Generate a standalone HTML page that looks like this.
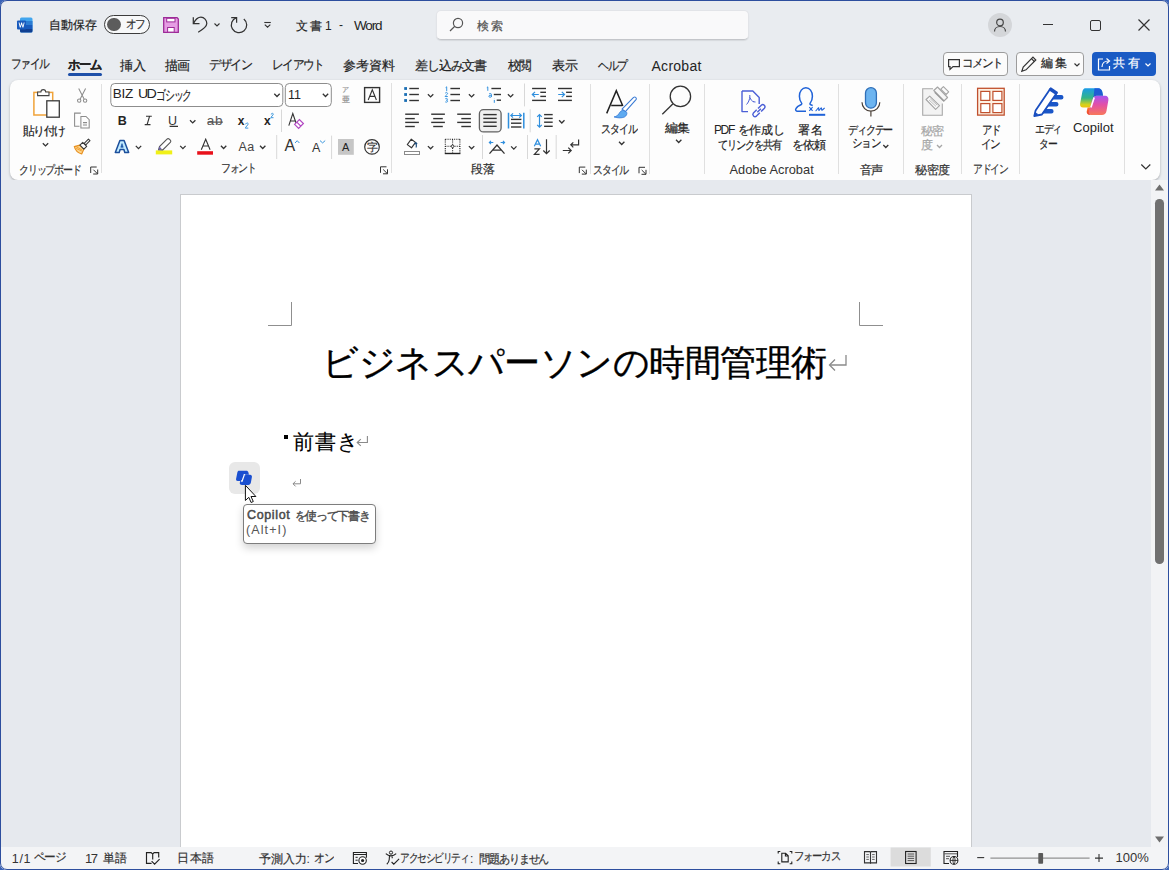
<!DOCTYPE html>
<html lang="ja"><head><meta charset="utf-8">
<style>
*{box-sizing:border-box}
html,body{margin:0;padding:0;width:1169px;height:870px;overflow:hidden;background:#3a63b8}
body{font-family:"Liberation Sans",sans-serif;color:#242424;position:relative}
.a{position:absolute;white-space:nowrap;line-height:1;-webkit-text-stroke:0.2px currentColor}
#win{position:absolute;left:0;top:0;width:1169px;height:870px;background:#e9ecf0;border-radius:7px;overflow:hidden}
#frame{position:absolute;left:0;top:0;width:1169px;height:870px;border:1px solid #2d4e9e;border-radius:7px;pointer-events:none}
.sep{position:absolute;width:1px;background:#e0e0e0}
svg{position:absolute;overflow:visible}
.btn{position:absolute;border:1px solid #9c9c9c;border-radius:4px;background:#fbfbfb}
</style></head><body>
<div id="win">
<svg style="left:17px;top:17px" width="16" height="16" viewBox="0 0 16 16">
 <rect x="3" y="0.5" width="12.5" height="15" rx="1.5" fill="#41a5ee"/>
 <rect x="3" y="4" width="12.5" height="4" fill="#2b7cd3"/>
 <rect x="3" y="8" width="12.5" height="4" fill="#185abd"/>
 <path d="M3 12h12.5v2a1.5 1.5 0 0 1-1.5 1.5H4.5A1.5 1.5 0 0 1 3 14z" fill="#103f91"/>
 <rect x="0" y="3.5" width="9" height="9" rx="1" fill="#185abd"/>
 <path d="M1.6 5.6l1.2 5h.9l.9-3.2.9 3.2h.9l1.2-5h-.9l-.8 3.4-.9-3.4h-.8l-.9 3.4-.8-3.4z" fill="#fff"/>
</svg><div class="a" style="left:48.60px;top:18.80px;font-size:12px;letter-spacing:0.13px">自動保存</div><div class="a" style="left:104px;top:15px;width:46px;height:19px;border:1px solid #3c3c3c;border-radius:10px;background:#f7f8f9"></div><div class="a" style="left:107.3px;top:17.6px;width:13.4px;height:13.4px;border-radius:7px;background:#5c5c5c"></div><div class="a" style="left:125.60px;top:17.80px;font-size:12px;color:#333;letter-spacing:-1.44px;transform:scaleX(0.8867);transform-origin:0 0">オフ</div><svg style="left:163px;top:17px" width="16" height="16" viewBox="0 0 16 16">
 <path d="M.7 .7h13.4l1.2 1.2v13.4H.7z" fill="#e69de4" stroke="#9d2b98" stroke-width="1.3"/>
 <rect x="3.7" y="1.3" width="8.3" height="3.6" fill="#fff" stroke="#9d2b98" stroke-width="1"/>
 <rect x="4.6" y="10.5" width="6.6" height="4.6" fill="#fff" stroke="#9d2b98" stroke-width="1"/>
</svg>
<svg style="left:0;top:0" width="400" height="50" viewBox="0 0 400 50" fill="none" stroke="#333" stroke-width="1.25">
 <path d="M193.3 17.2v6.3h6.2"/><path d="M193.6 23.2c2-3.8 4.4-6 7.3-6 3.3 0 5.9 2.8 5.9 6.4 0 2.5-1.4 4.4-8.6 8.7"/>
 <path d="M231.2 17.5h5.4v5.2"/><path d="M236.4 17.7A7.7 7.7 0 1 0 243.8 18.9"/>
</svg>
<svg style="left:214px;top:22.8px" width="6" height="4" viewBox="0 0 6 4" fill="none" stroke="#333" stroke-width="1.1"><path d="M.5 .5l2.5 2.5 2.5-2.5"/></svg>

<svg style="left:264px;top:22px" width="7" height="6" viewBox="0 0 7 6" fill="none" stroke="#333" stroke-width="1.1"><path d="M.3 .5h6.5"/><path d="M.8 2.6l2.75 2.6 2.75-2.6"/></svg>
<div class="a" style="left:296.00px;top:20.40px;font-size:12px;letter-spacing:2.00px">文書</div><div class="a" style="left:325.00px;top:20.00px;font-size:12px;-webkit-text-stroke:0">1</div><div class="a" style="left:339.00px;top:19.00px;font-size:12px;-webkit-text-stroke:0">-</div><div class="a" style="left:354.00px;top:18.90px;font-size:13.5px;letter-spacing:-1.17px;-webkit-text-stroke:0">Word</div><div class="a" style="left:436px;top:9.7px;width:313px;height:30.5px;background:#f9f9fa;border:1px solid #e2e4e8;border-bottom-color:#c4c6ca;border-radius:5px;box-shadow:0 1px 1px rgba(0,0,0,0.08)"></div><svg style="left:449px;top:17px" width="15" height="15" viewBox="0 0 15 15" fill="none" stroke="#555" stroke-width="1.2">
 <circle cx="9" cy="6" r="4.6"/><path d="M5.8 9.3L1 14"/>
</svg><div class="a" style="left:477.00px;top:20.00px;font-size:12px;color:#555;letter-spacing:2.00px">検索</div><div class="a" style="left:988px;top:13px;width:24px;height:24px;border-radius:12px;background:#d4d6d9"></div>
<svg style="left:992px;top:17px" width="16" height="16" viewBox="0 0 16 16" fill="none" stroke="#444" stroke-width="1.2">
 <circle cx="8" cy="5.5" r="3.3"/><path d="M2.5 14.5c0-3 2.5-5 5.5-5s5.5 2 5.5 5"/>
</svg>
<div class="a" style="left:1043px;top:24px;width:10px;height:1px;background:#333"></div>
<div class="a" style="left:1090px;top:19.5px;width:11px;height:11px;border:1.2px solid #333;border-radius:2px"></div>
<svg style="left:1138px;top:19px" width="12" height="12" viewBox="0 0 12 12" stroke="#333" stroke-width="1.2"><path d="M.5 .5l11 11M11.5 .5l-11 11"/></svg>
<div class="btn" style="left:943px;top:52px;width:65px;height:24px"></div>
<svg style="left:948px;top:59px" width="12" height="11" viewBox="0 0 12 11" fill="none" stroke="#333" stroke-width="1.2"><path d="M.6 .6h10.8v7H5L2 10.4V7.6H.6z"/></svg>
<div class="btn" style="left:1016px;top:52px;width:68px;height:24px"></div>
<svg style="left:1021px;top:56px" width="16" height="16" viewBox="0 0 16 16" fill="none" stroke="#333" stroke-width="1.2"><path d="M12 1.2l2.8 2.8-9.8 9.8-4.2 1.4 1.4-4.2z"/><path d="M10.5 2.7l2.8 2.8"/></svg>
<svg style="left:1074px;top:62.5px" width="6" height="4" viewBox="0 0 6 4" fill="none" stroke="#333" stroke-width="1.2"><path d="M.5 .5l2.5 2.5 2.5-2.5"/></svg>
<div class="a" style="left:1092px;top:52px;width:64px;height:24px;border-radius:4px;background:#1a5bc4"></div>
<svg style="left:1097px;top:57px" width="14" height="14" viewBox="0 0 14 14" fill="none" stroke="#fff" stroke-width="1.2"><path d="M6 2H1.5v11h11V9"/><path d="M5 10c0-4 3-6 6.5-6"/><path d="M9.5 1.5l3 2.5-3 2.5"/></svg>
<svg style="left:1145px;top:62.5px" width="6" height="4" viewBox="0 0 6 4" fill="none" stroke="#fff" stroke-width="1.2"><path d="M.5 .5l2.5 2.5 2.5-2.5"/></svg>
<div class="a" style="left:962.00px;top:57.00px;font-size:12px;letter-spacing:-1.44px;transform:scaleX(0.9615);transform-origin:0 0">コメント</div><div class="a" style="left:1040.70px;top:57.40px;font-size:12px;letter-spacing:2.00px">編集</div><div class="a" style="left:1112.50px;top:57.40px;font-size:12px;color:#fff;letter-spacing:3.20px">共有</div><div class="a" style="left:11.30px;top:57.20px;font-size:13px;letter-spacing:-1.56px;transform:scaleX(0.8216);transform-origin:0 0">ファイル</div><div class="a" style="left:119.50px;top:59.20px;font-size:13px;letter-spacing:0.60px">挿入</div><div class="a" style="left:165.40px;top:59.20px;font-size:13px;letter-spacing:-1.40px">描画</div><div class="a" style="left:209.00px;top:58.20px;font-size:13px;letter-spacing:-1.56px;transform:scaleX(0.9289);transform-origin:0 0">デザイン</div><div class="a" style="left:271.50px;top:58.20px;font-size:13px;letter-spacing:-1.56px;transform:scaleX(0.8991);transform-origin:0 0">レイアウト</div><div class="a" style="left:343.00px;top:59.20px;font-size:13px;letter-spacing:-0.07px">参考資料</div><div class="a" style="left:415.40px;top:59.20px;font-size:13px;letter-spacing:-1.28px">差し込み文書</div><div class="a" style="left:507.80px;top:59.20px;font-size:13px;letter-spacing:-1.56px;transform:scaleX(0.9698);transform-origin:0 0">校閲</div><div class="a" style="left:552.30px;top:59.20px;font-size:13px;letter-spacing:-0.20px">表示</div><div class="a" style="left:597.50px;top:59.20px;font-size:13px;letter-spacing:-1.56px;transform:scaleX(0.8364);transform-origin:0 0">ヘルプ</div><div class="a" style="left:651.50px;top:58.50px;font-size:14px;letter-spacing:0.27px;-webkit-text-stroke:0">Acrobat</div><div class="a" style="left:67.80px;top:58.20px;font-size:13px;font-weight:bold;letter-spacing:-1.56px;transform:scaleX(0.9453);transform-origin:0 0">ホーム</div><div class="a" style="left:68px;top:73px;width:34px;height:3px;border-radius:1.5px;background:#1d4fa8"></div><div class="a" style="left:9.5px;top:79.5px;width:1150px;height:100.5px;background:#fdfdfd;border-radius:8px;box-shadow:0 1px 2.5px rgba(0,0,0,0.28)"></div><div class="sep" style="left:101.3px;top:83.5px;height:89.5px"></div><div class="sep" style="left:391.3px;top:82.5px;height:90.5px"></div><div class="sep" style="left:589.8px;top:84px;height:89.80000000000001px"></div><div class="sep" style="left:649.3px;top:84px;height:89.80000000000001px"></div><div class="sep" style="left:703.9px;top:84px;height:89.80000000000001px"></div><div class="sep" style="left:838.0px;top:84px;height:89.80000000000001px"></div><div class="sep" style="left:903.1px;top:84px;height:89.80000000000001px"></div><div class="sep" style="left:961.0px;top:84px;height:89.80000000000001px"></div><div class="sep" style="left:1019.0px;top:84px;height:89.80000000000001px"></div><div class="sep" style="left:1123.8px;top:84px;height:89.80000000000001px"></div><svg style="left:0;top:0" width="1169" height="870" viewBox="0 0 1169 870"><rect x="33.9" y="92.4" width="18.8" height="22.6" fill="#fff" stroke="#f0a33a" stroke-width="1.5"/>
<path d="M37.6 95.6v-3.6h3.3a2.4 2.4 0 0 1 4.8 0h3.3v3.6z" fill="#fff" stroke="#444" stroke-width="1.1"/>
<rect x="46.8" y="100.8" width="12.5" height="16.4" fill="#fff" stroke="#3b3b3b" stroke-width="1.3"/>
<g fill="none" stroke="#8c8c8c" stroke-width="1.05">
<circle cx="79.2" cy="100.6" r="1.7"/><circle cx="85.1" cy="100.6" r="1.7"/>
<path d="M80.2 99.1L85.6 88.4M84.1 99.1L78.7 88.4"/>
<path d="M79.5 126.3h-4.9v-13.2h6.2"/>
<path d="M80.9 116.5h5.1l3.2 3.2v8.4h-8.3z"/><path d="M83 122.6h4M83 125h4"/>
</g>
<path d="M79.9 145.1L74.3 146.6Q75.8 152.2 81.7 154L83.9 149.1Z" fill="#fcd58e" stroke="#e8901e" stroke-width="1.15" stroke-linejoin="round"/>
<path d="M76.2 148.4l5.6 2.6M75.6 146.3l6.4 3.7" stroke="#ef9a2a" stroke-width=".9"/>
<path d="M83.87 149.09L79.91 145.13 82.73 142.31 86.69 146.27Z" fill="#fff" stroke="#3b3b3b" stroke-width="1.1" stroke-linejoin="round"/>
<path d="M89.98 140.58L88.42 139.02 84.2 143.3 85.8 144.8Z" fill="#fff" stroke="#3b3b3b" stroke-width="1.1" stroke-linejoin="round"/>
<path d="M42.8 143.2l2.7 2.7 2.7 -2.7" fill="none" stroke="#333" stroke-width="1.3"/><g fill="none" stroke="#333" stroke-width="1"><path d="M90.7 173.0V167.0H96.7"/><path d="M93.4 169.7L97.5 173.8"/><path d="M97.7 169.5V174.0H93.2"/></g><rect x="110.8" y="83.5" width="172" height="23" rx="4" fill="#fff" stroke="#8d8d8d" stroke-width="1"/><rect x="285.3" y="83.5" width="46" height="23" rx="4" fill="#fff" stroke="#8d8d8d" stroke-width="1"/><path d="M274.3 93.8l2.7 2.7 2.7 -2.7" fill="none" stroke="#333" stroke-width="1.3"/><path d="M322.8 93.8l2.7 2.7 2.7 -2.7" fill="none" stroke="#333" stroke-width="1.3"/><rect x="364.6" y="87.6" width="15" height="14.8" fill="none" stroke="#333" stroke-width="1.4"/><path d="M368.2 100l4.1-10.2 4.1 10.2M369.7 96.4h5.2" fill="none" stroke="#333" stroke-width="1.1"/><path d="M190 120.2l2.7 2.7 2.7 -2.7" fill="none" stroke="#333" stroke-width="1.3"/><path d="M207.6 122.1h15.2" stroke="#555" stroke-width="1.1"/><path d="M169.6 126.4h8.4" stroke="#333" stroke-width="1.2"/><path d="M245.3 124l1.5-.8c.7-.4 1.4 0 1.4.7 0 .9-2.9 3.4-2.9 4.2h3" fill="none" stroke="#3a96dd" stroke-width="1"/><path d="M270.9 114.3l1.2-.8c.6-.3 1.2 0 1.2.6 0 .8-2.4 2.9-2.4 3.6h2.6" fill="none" stroke="#3a96dd" stroke-width="1"/><path d="M288.8 125.6l4-12.1 3.6 10.5M290.3 121h4.6" fill="none" stroke="#333" stroke-width="1.1"/><path d="M294.6 124.3l4.8-4.8 4 4-4.8 4.8z M296.8 122.1l4 4" fill="#fff" stroke="#b146c2" stroke-width="1.2"/><path d="M115.3 152.4L119.9 140.5H124.1L128.7 152.4H124.8L123.9 149.6H120.1L119.2 152.4Z" fill="#bfeaff" stroke="#1c4f9c" stroke-width="1.5" stroke-linejoin="round"/><path d="M120.8 147.3H123.2L122 143.6Z" fill="#1c5fb8" stroke="#1c4f9c" stroke-width=".6"/><path d="M135.8 145.9l2.7 2.7 2.7 -2.7" fill="none" stroke="#333" stroke-width="1.3"/><rect x="155.8" y="150.4" width="16.4" height="4" fill="#f0f018"/><path d="M158.5 149.8l1-3.2 7.5-7.5a1.6 1.6 0 0 1 2.3 0l1 1a1.6 1.6 0 0 1 0 2.3l-7.5 7.5z" fill="#fff" stroke="#555" stroke-width="1.1"/><path d="M158.5 149.8l1-3.2 2.2 2.2z" fill="#6b5fb0"/><path d="M180.2 145.9l2.7 2.7 2.7 -2.7" fill="none" stroke="#333" stroke-width="1.3"/><path d="M201.3 149.8l4.4-10.6 4.4 10.6M202.9 146h5.6" fill="none" stroke="#333" stroke-width="1.1"/><rect x="197.2" y="151.2" width="15.8" height="3.5" fill="#e8111b"/><path d="M220.9 145.8l2.7 2.7 2.7 -2.7" fill="none" stroke="#333" stroke-width="1.3"/><path d="M260 145.8l2.7 2.7 2.7 -2.7" fill="none" stroke="#333" stroke-width="1.3"/><path d="M295 143l2.2-2.3 2.2 2.3" fill="none" stroke="#3a96dd" stroke-width="1"/><path d="M320 140.6l2.6 2.3 2.6-2.3" fill="none" stroke="#3a96dd" stroke-width="1"/><rect x="338" y="139" width="15.8" height="15.8" fill="#c6c6c6"/><circle cx="372" cy="146.9" r="7.3" fill="none" stroke="#333" stroke-width="1.2"/><g fill="none" stroke="#333" stroke-width="1"><path d="M380.5 172.8V166.8H386.5"/><path d="M383.2 169.5L387.3 173.60000000000002"/><path d="M387.5 169.3V173.8H383"/></g><path d="M281.5 109.5V132" stroke="#d8d8d8" stroke-width="1"/><path d="M276.7 135V159" stroke="#d8d8d8" stroke-width="1"/><path d="M331.6 135.6V159" stroke="#d8d8d8" stroke-width="1"/><rect x="404.2" y="87.1" width="2.8" height="2.8" fill="#1b6fb5"/><rect x="404.2" y="93.1" width="2.8" height="2.8" fill="#1b6fb5"/><rect x="404.2" y="99.1" width="2.8" height="2.8" fill="#1b6fb5"/><path d="M409.3 88.5H418.9" stroke="#333" stroke-width="1.4"/><path d="M409.3 94.5H418.9" stroke="#333" stroke-width="1.4"/><path d="M409.3 100.5H418.9" stroke="#333" stroke-width="1.4"/><path d="M427.9 94.2l2.7 2.7 2.7 -2.7" fill="none" stroke="#333" stroke-width="1.3"/><path d="M450.4 88.5H460" stroke="#333" stroke-width="1.4"/><path d="M450.4 94.5H460" stroke="#333" stroke-width="1.4"/><path d="M450.4 100.5H460" stroke="#333" stroke-width="1.4"/><g fill="none" stroke="#2f8fde" stroke-width=".95"><path d="M445.6 87.6l1.1-.8v4.4"/><path d="M445.1 93.4c.3-.5.8-.8 1.4-.8.6 0 1.1.4 1.1 1 0 .9-2.5 2.1-2.5 2.9h2.7"/><path d="M445.2 98.9c.3-.3.7-.5 1.2-.5.7 0 1.1.4 1.1.9s-.5.9-1.1.9c.7 0 1.2.4 1.2 1s-.5 1-1.2 1c-.5 0-.9-.2-1.2-.5"/></g><path d="M468.9 94.2l2.7 2.7 2.7 -2.7" fill="none" stroke="#333" stroke-width="1.3"/><path d="M491.4 88.5H501" stroke="#333" stroke-width="1.4"/><path d="M493.8 94.5H501" stroke="#333" stroke-width="1.4"/><path d="M496.7 100.2H501" stroke="#333" stroke-width="1.4"/><g fill="none" stroke="#2f8fde" stroke-width="1"><path d="M486.8 87.6l1-.7v3.9"/><path d="M489 94c.5-.4 1-.5 1.4-.5.6 0 1 .4 1 1v2.6M491.4 95.3h-1.2c-.8 0-1.3.4-1.3 1s.5 1 1.2 1c.6 0 1.1-.4 1.3-.9"/><path d="M494.3 98.8v.3M494.3 100v2.8"/></g><path d="M507.9 94.2l2.7 2.7 2.7 -2.7" fill="none" stroke="#333" stroke-width="1.3"/><path d="M524.5 83.5V106.4" stroke="#d8d8d8"/><path d="M532.1 88.5H546" stroke="#333" stroke-width="1.4"/><path d="M532.1 100.4H546" stroke="#333" stroke-width="1.4"/><path d="M540.3 92.3H546" stroke="#333" stroke-width="1.4"/><path d="M540.3 96.4H546" stroke="#333" stroke-width="1.4"/><path d="M538.8 94.5h-6M535 91.8l-2.7 2.7 2.7 2.7" fill="none" stroke="#2f8fde" stroke-width="1.2"/><path d="M558 88.5H571.9" stroke="#333" stroke-width="1.4"/><path d="M558 100.4H571.9" stroke="#333" stroke-width="1.4"/><path d="M566.1 92.3H571.9" stroke="#333" stroke-width="1.4"/><path d="M566.1 96.4H571.9" stroke="#333" stroke-width="1.4"/><path d="M558.2 94.5h6M561.8 91.8l2.7 2.7-2.7 2.7" fill="none" stroke="#2f8fde" stroke-width="1.2"/><path d="M405.2 114.2H418.9" stroke="#333" stroke-width="1.4"/><path d="M405.2 122.4H418.9" stroke="#333" stroke-width="1.4"/><path d="M405.2 118.6H414.8" stroke="#333" stroke-width="1.4"/><path d="M405.2 126.5H414.8" stroke="#333" stroke-width="1.4"/><path d="M431.2 114.2H444.9" stroke="#333" stroke-width="1.4"/><path d="M431.2 122.4H444.9" stroke="#333" stroke-width="1.4"/><path d="M433.2 118.6H442.8" stroke="#333" stroke-width="1.4"/><path d="M433.2 126.5H442.8" stroke="#333" stroke-width="1.4"/><path d="M457.2 114.2H470.9" stroke="#333" stroke-width="1.4"/><path d="M457.2 122.4H470.9" stroke="#333" stroke-width="1.4"/><path d="M461.3 118.6H470.9" stroke="#333" stroke-width="1.4"/><path d="M461.3 126.5H470.9" stroke="#333" stroke-width="1.4"/><rect x="479.4" y="109.7" width="21.7" height="22.2" rx="4" fill="#f0f0f0" stroke="#616161" stroke-width="1.3"/><path d="M483.3 114.6H496.7" stroke="#333" stroke-width="1.4"/><path d="M483.3 118.4H496.7" stroke="#333" stroke-width="1.4"/><path d="M483.3 122.2H496.7" stroke="#333" stroke-width="1.4"/><path d="M483.3 126.3H496.7" stroke="#333" stroke-width="1.4"/><path d="M508.5 112.7v15.8M523.8 112.7v15.8" stroke="#2f8fde" stroke-width="1.5"/><path d="M510.8 115.5h10.6M513 113.3l-2.2 2.2 2.2 2.2M519.2 113.3l2.2 2.2-2.2 2.2" fill="none" stroke="#2f8fde" stroke-width="1.2"/><path d="M511 119.4H521.4" stroke="#333" stroke-width="1.4"/><path d="M511 123.2H521.4" stroke="#333" stroke-width="1.4"/><path d="M511 127H521.4" stroke="#333" stroke-width="1.4"/><path d="M530.2 109.3V132.3" stroke="#d8d8d8"/><path d="M539.5 114.6v12.6M537.2 116.9l2.3-2.3 2.3 2.3M537.2 124.9l2.3 2.3 2.3-2.3" fill="none" stroke="#2f8fde" stroke-width="1.2"/><path d="M544.1 114.6H552.7" stroke="#333" stroke-width="1.4"/><path d="M544.1 118.4H552.7" stroke="#333" stroke-width="1.4"/><path d="M544.1 122.2H552.7" stroke="#333" stroke-width="1.4"/><path d="M544.1 126.3H552.7" stroke="#333" stroke-width="1.4"/><path d="M559.1 120.3l2.7 2.7 2.7 -2.7" fill="none" stroke="#333" stroke-width="1.3"/><path d="M407.3 144.6l4-5.4 4.2 3.2-4 5.4z" fill="#fff" stroke="#333" stroke-width="1.1" stroke-linejoin="round"/><path d="M416.2 147.5c.3-1.5.4-3-.4-4.3M414.5 144l1.4-1.4 1.2 1.6" fill="none" stroke="#1f4f7f" stroke-width="1.2"/><rect x="404.5" y="151.5" width="15" height="3" fill="#fff" stroke="#8a8a8a" stroke-width="1"/><path d="M427.9 146.1l2.7 2.7 2.7 -2.7" fill="none" stroke="#333" stroke-width="1.3"/><g fill="none" stroke="#222" stroke-width="1.1" stroke-dasharray="1.1 1.1"><path d="M445.3 139.3h14.6M459.9 139.3v14M445.3 139.3v14M452.6 139.3v5.5M452.6 148v5.5M445.3 146.3h5.5M454.5 146.3h5.5"/></g><circle cx="452.6" cy="146.3" r="1.3" fill="none" stroke="#222" stroke-width=".9"/><path d="M444.8 153.5h15.6" stroke="#222" stroke-width="1.4"/><path d="M468.9 146.1l2.7 2.7 2.7 -2.7" fill="none" stroke="#333" stroke-width="1.3"/><path d="M482.5 135V159" stroke="#d8d8d8"/><path d="M489.3 142.5h4M491 140.8l-1.7 1.7 1.7 1.7M500.6 142.5h4M502.9 140.8l1.7 1.7-1.7 1.7" fill="none" stroke="#2f8fde" stroke-width="1.1"/><path d="M489.5 153.6l7.5-8.6 7.5 8.6M492.5 150.2h9" fill="none" stroke="#333" stroke-width="1.3"/><path d="M511.1 146.4l2.7 2.7 2.7 -2.7" fill="none" stroke="#333" stroke-width="1.3"/><path d="M527.5 135V159M556.2 135V159" stroke="#d8d8d8"/><path d="M534.3 146.2l3.2-6.5 3.2 6.5M535.4 144.1h4.2" fill="none" stroke="#2f8fde" stroke-width="1.2"/><path d="M534.4 148.9h5l-5 5.5h5.2" fill="none" stroke="#333" stroke-width="1.2"/><path d="M546.5 139.2v14.5M543.3 150.5l3.2 3.2 3.2-3.2" fill="none" stroke="#333" stroke-width="1.2"/><path d="M578.6 139.6v5.2h-7.6M573.3 142.3l-2.5 2.5 2.5 2.5" fill="none" stroke="#333" stroke-width="1.2"/><path d="M562.8 150.5h8.4M568.3 147.6l2.9 2.9-2.9 2.9" fill="none" stroke="#333" stroke-width="1.2"/><g fill="none" stroke="#333" stroke-width="1"><path d="M579.3 173.1V167.1H585.3"/><path d="M582.0 169.79999999999998L586.0999999999999 173.9"/><path d="M586.3 169.6V174.1H581.8"/></g><path d="M606.7 113.4l9.6-22.8 6.5 15.4M611.2 105.4h11" fill="none" stroke="#222" stroke-width="1.5"/><path d="M633.6 97.4c1.4-1 3.3.3 2.6 1.9l-10.8 12.4-3.4-2.6z" fill="#fff" stroke="#3a7bd5" stroke-width="1.1" stroke-linejoin="round"/><path d="M614 116.9c2.8-.1 4.5-2.3 6-4.8 1-1.3 2.5-2 3.6-1.7l3.2 2c.5 1.8-.6 3.5-2.3 4.6-3 1.2-6.5 1.2-10.5-.1z" fill="#5eaaf0" stroke="#3a7bd5" stroke-width=".8"/><path d="M619 141.8l2.7 2.7 2.7 -2.7" fill="none" stroke="#333" stroke-width="1.3"/><g fill="none" stroke="#333" stroke-width="1"><path d="M639.0 173.3V167.3H645.0"/><path d="M641.7 170.0L645.8 174.10000000000002"/><path d="M646.0 169.8V174.3H641.5"/></g><circle cx="680.4" cy="96.4" r="10.2" fill="none" stroke="#333" stroke-width="1.3"/><path d="M673 103.7L662.3 114.2" stroke="#333" stroke-width="1.3"/><path d="M676 139.8l2.7 2.7 2.7 -2.7" fill="none" stroke="#333" stroke-width="1.3"/><path d="M742 91h10.8l6.4 6.4V104M748 111.6h-6V91" fill="none" stroke="#4b5fd6" stroke-width="1.4" stroke-linejoin="round"/><path d="M746.5 104.5c1.6-1.5 3.4-5 3.4-8.5l-.2-1M750 97.5c.6 2 2 4 4 4.3M753.5 101.8l2 .2" fill="none" stroke="#4b5fd6" stroke-width="1"/><g fill="none" stroke="#4b5fd6" stroke-width="1.4"><path d="M758 108.5l3.3-3.3a2.2 2.2 0 0 1 3.1 3.1l-3.3 3.3"/><path d="M759.8 112.8l-3.3 3.3a2.2 2.2 0 0 1-3.1-3.1l3.3-3.3"/><path d="M757.3 112.3l3.6-3.6"/></g><path d="M806 111.3H797.5c-1.6 0-2.3-1.5-1.6-2.7 1-1.9 3.2-3.1 5.4-4.1.5-.3.7-.9.3-1.4-1.3-1.7-2.2-4.2-2.2-6.9 0-4.9 2.8-8.4 6.5-8.4s6.5 3.5 6.5 8.4c0 2.7-.9 5.2-2.2 6.9-.4.5-.3 1.300.2 1.600.6.4 1.4.6 2.3.7" fill="none" stroke="#1f62d8" stroke-width="1.5" stroke-linejoin="round"/><path d="M809.3 107.2l3.3 3.6M812.6 107.2l-3.3 3.6" stroke="#1f62d8" stroke-width="1.1"/><path d="M815.6 111c1.4-1 2.2-3 3-3.3.6.2-.4 2.6.4 2.8.7-.2 1.6-2.6 2.4-2.6.6.2-.2 2.2.5 2.4.8-.1 1.5-1.6 2.8-2.3" fill="none" stroke="#1f62d8" stroke-width="1.1"/><rect x="809" y="113.8" width="16.2" height="2" fill="#1f62d8"/><rect x="865.5" y="87.6" width="10.9" height="20.6" rx="5.45" fill="#6cb4f0" stroke="#2f6fb8" stroke-width="1.3"/><path d="M862 102.2c0 5 4 9 8.9 9s8.9-4 8.9-9M870.9 111.2v5.4" fill="none" stroke="#4a4038" stroke-width="1.2"/><rect x="922.7" y="88.8" width="19.6" height="26.4" fill="#f3f3f3"/><path d="M933 88.8H922.7V115.2H942.3V103.4" fill="none" stroke="#a8a8a8" stroke-width="1.1"/><path d="M926 99.5L929.7 96.2 939.5 105.6 935.6 109.3Z" fill="#fafafa" stroke="#a5a5a5" stroke-width="1.1" stroke-linejoin="round"/><path d="M929 99.9l7 6.5M930.2 98.7l7 6.5" stroke="#b0b0b0" stroke-width=".8"/><path d="M933.8 90.5L937.5 87 947.6 97.5 943.9 101Z" fill="#f6f6f6" stroke="#a5a5a5" stroke-width="1.1" stroke-linejoin="round"/><path d="M934.8 92.3l9.3 9" stroke="#9a9a9a" stroke-width="1.6"/><path d="M940.8 89.2L943.4 86.6 948.7 91.9 946.1 94.5Z" fill="#fafafa" stroke="#a5a5a5" stroke-width="1.1" stroke-linejoin="round"/><rect x="977.6" y="88.3" width="26.6" height="26.8" fill="#fdf0e2" stroke="#c0502e" stroke-width="1.3"/><rect x="980.8" y="91.4" width="9" height="9" fill="#fff" stroke="#c0502e" stroke-width="1.2"/><rect x="980.8" y="103.6" width="9" height="9" fill="#fff" stroke="#c0502e" stroke-width="1.2"/><rect x="992.9" y="91.4" width="9" height="9" fill="#fff" stroke="#c0502e" stroke-width="1.2"/><rect x="992.9" y="103.6" width="9" height="9" fill="#fff" stroke="#c0502e" stroke-width="1.2"/><path d="M1050 97.2h11.3M1044.8 104.2h11.5M1039.5 111.3h11.9" stroke="#1a56c8" stroke-width="4.4" stroke-linecap="round"/><path d="M1034.3 116l1.3-5.6 14.7-21.6 6.4 4.2-14.8 21.5z" fill="#fff" stroke="#1a4fc0" stroke-width="1.8" stroke-linejoin="round"/><path d="M1049.6 89.8l1.2-1.6 6.3 4.2-1 1.7z" fill="#1a4fc0" stroke="#1a4fc0" stroke-width="1.6" stroke-linejoin="round"/><path d="M1034.1 116.3l.9-4.3 3.4 2.3z" fill="#1a4fc0"/><defs>
<linearGradient id="cpA" x1="0" y1="0" x2="0" y2="1"><stop offset="0" stop-color="#1b9be8"/><stop offset="0.5" stop-color="#33b489"/><stop offset="0.85" stop-color="#d8d11a"/><stop offset="1" stop-color="#f0c010"/></linearGradient>
<linearGradient id="cpB" x1="0" y1="0" x2="0" y2="1"><stop offset="0" stop-color="#a855f0"/><stop offset="0.45" stop-color="#e24fa8"/><stop offset="1" stop-color="#f8785a"/></linearGradient>
<linearGradient id="cpC" x1="0" y1="0" x2="0" y2="1"><stop offset="0" stop-color="#ff7a30"/><stop offset="1" stop-color="#e83a28"/></linearGradient>
</defs>
<path d="M1085 88.2h13.3c2 0 3.4 1.3 3.9 3.3l.9 4.3h-6.6c-1.5 0-2.6.9-3.1 2.3l-3.1 9.5h-7.2c-2.1 0-3.4-1.7-3-3.8l2.3-12.3c.4-2 1.6-3.3 2.6-3.3z" fill="url(#cpA)"/>
<path d="M1094.5 88.2h3.8c2 0 3.4 1.3 3.9 3.3l.9 4.3h-6.6c-1.5 0-2.6.9-3.1 2.3z" fill="#1d4fd8" opacity=".85"/>
<path d="M1087.6 107.6h3.2l-1.4 4.3c-.5 1.5.4 3.1 2 3.1h-1.4c-2 0-3.5-1.6-3.3-3.6z" fill="url(#cpC)"/>
<path d="M1096.7 95.8h8.5c2.2 0 3.6 1.9 3.2 4.1l-1.9 11c-.4 2.4-2.2 4.1-4.6 4.1h-10.9c-1.7 0-2.7-1.6-2.2-3.2l3.3-11.2.5-1.6c.5-1.9 2.1-3.2 4.1-3.2z" fill="url(#cpB)"/>
<path d="M1094.2 97.5l-3.3 10" stroke="#fff" stroke-width="1.6"/>
<path d="M1141.3 164.5l4.5 4.5 4.5 -4.5" fill="none" stroke="#333" stroke-width="1.2"/></svg><div class="a" style="left:112.70px;top:87.20px;font-size:13.5px;letter-spacing:-0.18px;-webkit-text-stroke:0">BIZ</div><div class="a" style="left:137.80px;top:87.20px;font-size:13.5px;letter-spacing:-1.62px;transform:scaleX(1.0545);transform-origin:0 0;-webkit-text-stroke:0">UD</div><div class="a" style="left:155.50px;top:89.20px;font-size:13.5px;letter-spacing:-1.62px;transform:scaleX(0.7108);transform-origin:0 0">ゴシック</div><div class="a" style="left:287.90px;top:89.30px;font-size:12.5px;letter-spacing:0.18px;-webkit-text-stroke:0">11</div><div class="a" style="left:23.00px;top:124.60px;font-size:12px;letter-spacing:-1.44px;transform:scaleX(0.9841);transform-origin:0 0">貼り付け</div><div class="a" style="left:19.00px;top:164.00px;font-size:12px;color:#333;letter-spacing:-1.44px;transform:scaleX(0.8326);transform-origin:0 0">クリップボード</div><div class="a" style="left:221.40px;top:161.50px;font-size:12px;color:#333;letter-spacing:-1.44px;transform:scaleX(0.8265);transform-origin:0 0">フォント</div><div class="a" style="left:470.80px;top:163.00px;font-size:12px;color:#333;letter-spacing:-0.20px">段落</div><div class="a" style="left:600.70px;top:123.40px;font-size:12px;letter-spacing:-1.44px;transform:scaleX(0.8383);transform-origin:0 0">スタイル</div><div class="a" style="left:593.00px;top:163.80px;font-size:12px;color:#333;letter-spacing:-1.44px;transform:scaleX(0.8291);transform-origin:0 0">スタイル</div><div class="a" style="left:665.20px;top:121.80px;font-size:12px;letter-spacing:-1.24px;transform:scaleX(1.0785);transform-origin:0 0">編集</div><div class="a" style="left:714.40px;top:122.60px;font-size:13px;letter-spacing:-1.56px;transform:scaleX(0.9300);transform-origin:0 0;-webkit-text-stroke:0">PDF</div><div class="a" style="left:737.50px;top:124.40px;font-size:12px;letter-spacing:-0.13px">を作成し</div><div class="a" style="left:718.00px;top:138.50px;font-size:12px;letter-spacing:-1.44px;transform:scaleX(0.8493);transform-origin:0 0">てリンクを共有</div><div class="a" style="left:798.00px;top:124.40px;font-size:12px;letter-spacing:1.20px">署名</div><div class="a" style="left:792.00px;top:138.50px;font-size:12px;letter-spacing:-0.90px">を依頼</div><div class="a" style="left:729.50px;top:163.80px;font-size:12.8px;color:#333;letter-spacing:0.02px;-webkit-text-stroke:0">Adobe Acrobat</div><div class="a" style="left:848.20px;top:124.00px;font-size:12px;letter-spacing:-1.44px;transform:scaleX(0.8386);transform-origin:0 0">ディクテー</div><div class="a" style="left:851.70px;top:136.60px;font-size:12px;letter-spacing:-1.44px;transform:scaleX(0.8760);transform-origin:0 0">ション</div><div class="a" style="left:859.70px;top:164.00px;font-size:12px;color:#333;letter-spacing:-1.44px;transform:scaleX(1.0226);transform-origin:0 0">音声</div><div class="a" style="left:921.00px;top:125.00px;font-size:12px;color:#a6a6a6;letter-spacing:-0.80px">秘密</div><div class="a" style="left:921.00px;top:138.60px;font-size:12px;color:#a6a6a6">度</div><div class="a" style="left:915.00px;top:164.00px;font-size:12px;color:#333;letter-spacing:-0.40px">秘密度</div><div class="a" style="left:981.50px;top:124.00px;font-size:12px;letter-spacing:-1.44px;transform:scaleX(0.8665);transform-origin:0 0">アド</div><div class="a" style="left:981.00px;top:137.60px;font-size:12px;letter-spacing:-1.44px;transform:scaleX(0.8840);transform-origin:0 0">イン</div><div class="a" style="left:972.50px;top:163.00px;font-size:12px;color:#333;letter-spacing:-1.44px;transform:scaleX(0.8161);transform-origin:0 0">アドイン</div><div class="a" style="left:1035.00px;top:122.90px;font-size:12px;letter-spacing:-1.44px;transform:scaleX(0.8256);transform-origin:0 0">エディ</div><div class="a" style="left:1038.80px;top:138.30px;font-size:12px;letter-spacing:-1.44px;transform:scaleX(0.8183);transform-origin:0 0">ター</div><div class="a" style="left:1073.00px;top:121.10px;font-size:13px;letter-spacing:0.02px;-webkit-text-stroke:0">Copilot</div><svg style="left:0;top:0" width="1169" height="200" viewBox="0 0 1169 200"><path d="M883.3 145l2.5 2.5 2.5 -2.5" fill="none" stroke="#333" stroke-width="1.3"/><path d="M937 145l2.5 2.5 2.5 -2.5" fill="none" stroke="#a6a6a6" stroke-width="1.3"/></svg><div class="a" style="left:117.80px;top:114.80px;font-size:12.5px;font-weight:bold;-webkit-text-stroke:0">B</div><svg style="left:0;top:0" width="400" height="200"><path d="M146 116.2h5.8M144.7 124.6h5.8M149.6 116.2l-2.5 8.4" fill="none" stroke="#333" stroke-width="1.15"/></svg><div class="a" style="left:168.10px;top:114.80px;font-size:12.5px;color:#333;-webkit-text-stroke:0">U</div><div class="a" style="left:206.80px;top:114.10px;font-size:13.5px;color:#555;letter-spacing:0.69px;-webkit-text-stroke:0">ab</div><div class="a" style="left:237.80px;top:114.80px;font-size:12px;font-weight:bold;-webkit-text-stroke:0">x</div><div class="a" style="left:263.90px;top:114.80px;font-size:12px;font-weight:bold;-webkit-text-stroke:0">x</div><div class="a" style="left:238.60px;top:141.20px;font-size:12.5px;color:#444;letter-spacing:0.26px;-webkit-text-stroke:0">Aa</div><div class="a" style="left:284.40px;top:138.00px;font-size:16px;color:#333;-webkit-text-stroke:0">A</div><div class="a" style="left:312.00px;top:141.50px;font-size:12.5px;color:#333;-webkit-text-stroke:0">A</div><div class="a" style="left:342.00px;top:142.00px;font-size:11px;color:#222;-webkit-text-stroke:0">A</div><div class="a" style="left:367.00px;top:142.30px;font-size:11px;color:#333">字</div><div class="a" style="left:342.00px;top:86.90px;font-size:6.5px;color:#888">ア</div><div class="a" style="left:342.00px;top:95.70px;font-size:8px;color:#888">亜</div><div class="a" style="left:0;top:180px;width:1169px;height:667px;background:#e6e9ee"></div><div class="a" style="left:180px;top:194px;width:792px;height:660px;background:#fff;border:1px solid #c9cbce"></div><svg style="left:268px;top:302px" width="24" height="24" viewBox="0 0 24 24" fill="none" stroke="#8f8f8f" stroke-width="1"><path d="M23.5 0v23.5H0"/></svg>
<svg style="left:859px;top:301.5px" width="24" height="24" viewBox="0 0 24 24" fill="none" stroke="#8f8f8f" stroke-width="1"><path d="M.5 0v23.5H24"/></svg><div class="a" style="left:322.20px;top:346.00px;font-size:35.5px;color:#000;letter-spacing:-0.54px;-webkit-text-stroke:0.35px #000">ビジネスパーソンの時間管理術</div><svg style="left:828px;top:355px" width="19" height="17" viewBox="0 0 19 17" fill="none" stroke="#8a8a8a" stroke-width="1.3"><path d="M18 0v10H2"/><path d="M7 4.5L1.5 10 7 15.5"/></svg><div class="a" style="left:284.4px;top:435px;width:3.8px;height:3.8px;background:#000"></div><div class="a" style="left:293.00px;top:431.00px;font-size:21px;color:#000;letter-spacing:0.90px;-webkit-text-stroke:0.1px #000">前書き</div><svg style="left:356px;top:436px" width="12" height="11" viewBox="0 0 12 11" fill="none" stroke="#8a8a8a" stroke-width="1.1"><path d="M11.4 0v6.5H1.5"/><path d="M4.8 3.2L1.2 6.5 4.8 9.8"/></svg><svg style="left:292px;top:479px" width="9" height="8" viewBox="0 0 9 8" fill="none" stroke="#8a8a8a" stroke-width="1"><path d="M8.5 0v4.8H1"/><path d="M3.6 2.3L1 4.8l2.6 2.6"/></svg><div class="a" style="left:1151px;top:180px;width:17px;height:667px;background:#f2f3f5"></div><svg style="left:1155px;top:184px" width="9" height="7" viewBox="0 0 9 7"><path d="M0 6.5L4.5 .5 9 6.5z" fill="#6e6e6e"/></svg><svg style="left:1155px;top:836px" width="9" height="7" viewBox="0 0 9 7"><path d="M0 .5L4.5 6.5 9 .5z" fill="#6e6e6e"/></svg><div class="a" style="left:1155.2px;top:199px;width:8.6px;height:364.6px;border-radius:4.3px;background:#707070"></div><div class="a" style="left:0;top:847px;width:1169px;height:23px;background:#f3f4f6"></div><div class="a" style="left:11.80px;top:852.90px;font-size:12.5px;color:#333;letter-spacing:0.69px;-webkit-text-stroke:0">1/1</div><div class="a" style="left:34.00px;top:851.00px;font-size:12px;color:#333;letter-spacing:-1.44px;transform:scaleX(0.9722);transform-origin:0 0">ページ</div><div class="a" style="left:85.20px;top:852.90px;font-size:12.5px;color:#333;letter-spacing:-1.50px;transform:scaleX(1.0451);transform-origin:0 0;-webkit-text-stroke:0">17</div><div class="a" style="left:103.40px;top:852.00px;font-size:12px;color:#333;letter-spacing:-0.40px">単語</div><div class="a" style="left:177.00px;top:852.00px;font-size:12px;color:#333;letter-spacing:0.50px">日本語</div><div class="a" style="left:258.50px;top:852.50px;font-size:12px;color:#333;letter-spacing:0.07px">予測入力</div><div class="a" style="left:306.40px;top:852.50px;font-size:12px;color:#333;-webkit-text-stroke:0">:</div><div class="a" style="left:313.70px;top:852.20px;font-size:12px;color:#333;letter-spacing:-1.44px;transform:scaleX(0.9038);transform-origin:0 0">オン</div><div class="a" style="left:400.20px;top:851.60px;font-size:12px;color:#333;letter-spacing:-1.44px;transform:scaleX(0.8080);transform-origin:0 0">アクセシビリティ</div><div class="a" style="left:470.00px;top:852.50px;font-size:12px;color:#333;-webkit-text-stroke:0">:</div><div class="a" style="left:478.90px;top:852.50px;font-size:12px;color:#333;letter-spacing:-1.44px;transform:scaleX(0.9375);transform-origin:0 0">問題ありません</div><div class="a" style="left:793.60px;top:850.00px;font-size:12px;color:#333;letter-spacing:-1.44px;transform:scaleX(0.8654);transform-origin:0 0">フォーカス</div><div class="a" style="left:1115.40px;top:851.00px;font-size:13px;color:#333;letter-spacing:0.04px;-webkit-text-stroke:0">100%</div><svg style="left:0;top:0" width="1169" height="870" viewBox="0 0 1169 870"><path d="M151.6 863.3h-5.1V852.6h4.6l1.6 1.4v5.4M152.6 854.1l1.5-1.5h4.6v4.8M151.6 861.2l3 3 5-5" fill="none" stroke="#222" stroke-width="1.15"/><path d="M358 863.5h-4.6v-11h13v5.2" fill="none" stroke="#222" stroke-width="1.1"/><path d="M353.6 854.5h12.8" stroke="#222" stroke-width="1"/><path d="M355.5 857.3h2.2M355.5 860.2h2.2" stroke="#222" stroke-width="1"/><circle cx="362.6" cy="860.5" r="3.7" fill="#fff" stroke="#222" stroke-width="1.1"/><circle cx="362.6" cy="860.5" r="1.6" fill="#222"/><circle cx="391" cy="852.6" r="1.6" fill="none" stroke="#222" stroke-width="1"/><path d="M385.8 853.6c1.5 1.5 3 2.3 5.2 2.3s3.7-.8 5.2-2.3M389.5 855.8l-.3 4c-.2 1.6-1 3.3-2.4 4.4M392.2 856.5v1.8M391.6 862l2.2 2.2 5.3-5.3" fill="none" stroke="#222" stroke-width="1.1"/><path d="M778.2 853.6v-2.1h2.1M778.2 861.6v2.1h2.1M789.7 851.5h2.1v2.1M791.8 861.6v2.1h-2.1" fill="none" stroke="#222" stroke-width="1.1"/><path d="M781.8 853.2h3.8l2.6 2.6v6.1h-6.4z M785.4 853.2v2.8h2.8" fill="none" stroke="#222" stroke-width="1.1"/><path d="M864.5 851.6h5.2l.8.8.8-.8h5.2v11.3h-5.2l-.8.5-.8-.5h-5.2z M870.5 852.4v10.6" fill="none" stroke="#333" stroke-width="1.1"/><path d="M866.3 854.6h2.6M866.3 857h2.6M866.3 859.4h2.6M872.1 854.6h2.6M872.1 857h2.6M872.1 859.4h2.6" stroke="#555" stroke-width=".9"/><rect x="890.6" y="847.5" width="40.2" height="19" fill="#dcdcdc"/><rect x="905.6" y="851.5" width="10.5" height="12" fill="none" stroke="#222" stroke-width="1.1"/><path d="M907.6 854h6.5M907.6 856.2h6.5M907.6 858.4h6.5M907.6 860.6h6.5" stroke="#444" stroke-width=".9"/><path d="M949 863.5h-5v-12h13.5v5.5" fill="none" stroke="#222" stroke-width="1.1"/><path d="M944.5 853.8h12.5M946 856.3h4M946 858.7h3" stroke="#444" stroke-width=".9"/><circle cx="954" cy="860.4" r="3.9" fill="#fff" stroke="#222" stroke-width="1.05"/><path d="M950.1 860.4h7.8M954 856.5c-1.5 2.5-1.5 5.3 0 7.8M954 856.5c1.5 2.5 1.5 5.3 0 7.8" fill="none" stroke="#222" stroke-width=".9"/><path d="M977.2 857.6h7" stroke="#333" stroke-width="1.1"/><path d="M990.4 858.1h99.2" stroke="#7a7a7a" stroke-width="1"/><rect x="1038.3" y="853" width="4.8" height="10.8" rx=".8" fill="#5a5a5a"/><path d="M1095 858.1h8M1099 854.1v8" stroke="#333" stroke-width="1.1"/></svg><div class="a" style="left:228.6px;top:462.1px;width:31.2px;height:31.8px;border-radius:6px;background:#e8e8e8"></div><svg style="left:0;top:0" width="1169" height="870" viewBox="0 0 1169 870">
<g transform="translate(236 470.7) scale(0.56 0.53) translate(-1080 -88.2)">
<path d="M1085 88.2h13.3c2 0 3.4 1.3 3.9 3.3l.9 4.3h-6.6c-1.5 0-2.6.9-3.1 2.3l-3.1 9.5h-7.2c-2.1 0-3.4-1.7-3-3.8l2.3-12.3c.4-2 1.6-3.3 2.6-3.3z" fill="#1a4fd0"/>
<path d="M1087.6 107.6h3.2l-1.4 4.3c-.5 1.5.4 3.1 2 3.1h-1.4c-2 0-3.5-1.6-3.300-3.6z" fill="#1a4fd0"/>
<path d="M1096.7 95.8h8.5c2.2 0 3.6 1.9 3.2 4.1l-1.9 11c-.4 2.4-2.2 4.1-4.6 4.1h-10.9c-1.7 0-2.7-1.6-2.2-3.2l3.3-11.2.5-1.6c.5-1.900 2.1-3.2 4.1-3.2z" fill="#1a4fd0"/>
<path d="M1094.5 97l-3.6 10.8" stroke="#fff" stroke-width="2.2"/>
<circle cx="1095" cy="95.8" r="1.6" fill="#fff"/><circle cx="1090.5" cy="107.6" r="1.6" fill="#fff"/>
</g>
</svg><div class="a" style="left:243.4px;top:504.2px;width:132.4px;height:39.4px;border:1px solid #7d7d7d;border-radius:4px;background:#fff;box-shadow:0 4px 8px rgba(0,0,0,0.18)"></div><div class="a" style="left:247.00px;top:509.40px;font-size:12.5px;color:#4a4a4a;letter-spacing:0.63px;-webkit-text-stroke:0.5px #4a4a4a">Copilot</div><div class="a" style="left:294.50px;top:509.50px;font-size:12px;color:#4a4a4a;letter-spacing:-1.30px;-webkit-text-stroke:0.35px #4a4a4a">を使って下書き</div><div class="a" style="left:246.00px;top:523.80px;font-size:12.5px;color:#555;letter-spacing:1.11px;-webkit-text-stroke:0">(Alt+I)</div><svg style="left:0;top:0" width="1169" height="870" viewBox="0 0 1169 870">
<path d="M245.4 485.3v15.2l3.4-3.2 2.3 5.2 2.2-1-2.3-5h4.9z" fill="#fff" stroke="#111" stroke-width="1" stroke-linejoin="round"/>
</svg></div>
<div id="frame"></div>
</body></html>
